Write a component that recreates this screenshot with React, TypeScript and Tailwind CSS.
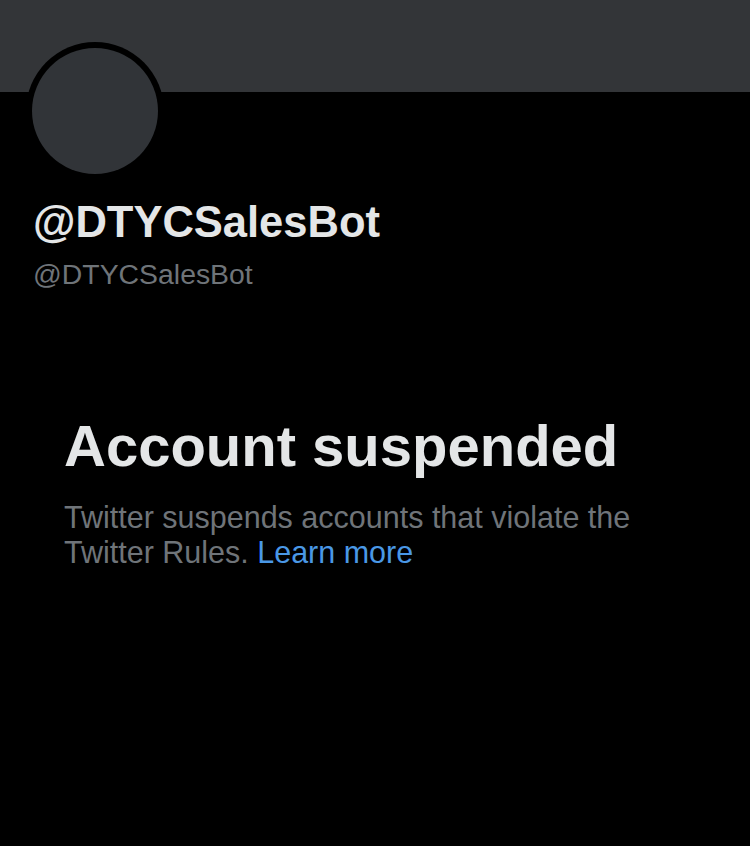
export default function App() {
  return (
    <div
      className="w-[750px] h-[846px] bg-black overflow-hidden"
      style={{ fontFamily: '"Liberation Sans", Arial, sans-serif' }}
    >
      <div className="h-[92px] bg-[#333538]" />
      <div className="ml-[26px] -mt-[50px] w-[138px] h-[138px] rounded-full bg-black p-[6px]">
        <div className="w-full h-full rounded-full bg-[#313438]" />
      </div>
      <div className="pl-[33px] mt-[17px]">
        <div className="text-[43.5px] leading-[50px] font-bold text-[#e4e6e7]">
          @DTYCSalesBot
        </div>
        <div className="mt-[11px] text-[28.4px] leading-[32px] text-[#6f7479]">
          @DTYCSalesBot
        </div>
      </div>
      <div className="pl-[64px] mt-[124px]">
        <div className="text-[58px] leading-[64px] font-bold text-[#e4e6e7]">
          Account suspended
        </div>
        <div className="mt-[22px] text-[30.5px] leading-[35px] text-[#6f7479]">
          Twitter suspends accounts that violate the
          <br />
          Twitter Rules. <span className="text-[#4a98e6]">Learn more</span>
        </div>
      </div>
    </div>
  );
}
